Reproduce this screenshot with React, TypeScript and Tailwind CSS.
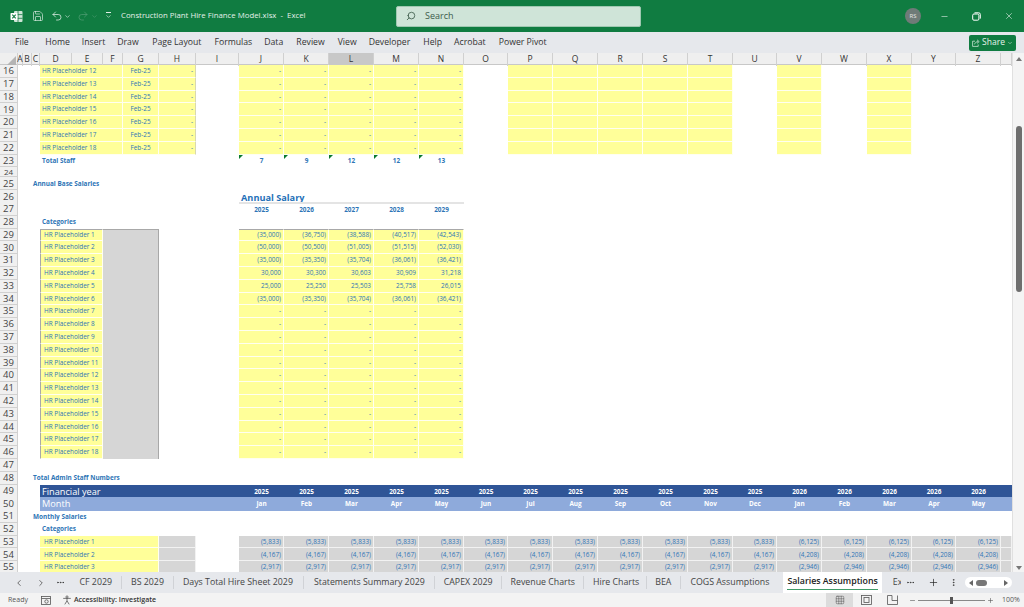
import { ChevronDown, ChevronLeft, ChevronRight, Ellipsis, EllipsisVertical, Grid3x3, Minus, Plus, Save, Search, Undo2, Redo2, X } from "lucide-react";

type Cell = { t?: string; c?: string; span?: number; corner?: boolean };
type Cells = Record<string, Cell>;

const LETTERS = "A B C D E F G H I J K L M N O P Q R S T U V W X Y Z AA".split(" ");
const SPANS: Record<number, string> = { 1: "", 2: "col-span-2", 3: "col-span-3", 4: "col-span-4" };
const GRID =
  "grid grid-cols-[18px_5px_9px_8px_32px_31px_20px_36px_37px_43px_45px_45px_45px_45px_45px_44px_45px_45px_45px_45px_45px_44px_45px_45px_45px_44px_45px_11px]";

const YELLOW = "bg-[#ffff99] border-r border-b border-[#fffff0]";
const GRAY = "bg-[#d6d6d6] border-r border-b border-[#f2f2f2]";
const BLUE = "text-[#2e75b6]";
const RIGHT = "justify-end pr-[2px]";

function Row({ n, cells, short }: { n: number; cells: Cells; short?: boolean }) {
  const out = [];
  for (let i = 0; i < LETTERS.length; i++) {
    const cell = cells[LETTERS[i]] ?? {};
    out.push(
      <div
        key={LETTERS[i]}
        className={`relative flex items-center whitespace-nowrap min-w-0 ${SPANS[cell.span ?? 1]} ${cell.c ?? ""}`}
      >
        {cell.corner && (
          <svg className="absolute left-0 top-0" width="4" height="4" viewBox="0 0 4 4">
            <path d="M0 0h4L0 4z" fill="#0a7a2f" />
          </svg>
        )}
        {cell.t}
      </div>
    );
    i += (cell.span ?? 1) - 1;
  }
  return (
    <div className={`${GRID} ${short ? "h-[10px]" : "h-[12.8px]"} text-[6.4px] font-['Open_Sans',sans-serif] ${BLUE}`}>
      <div
        className={`flex items-center justify-center overflow-hidden bg-[#f0f0f0] border-r border-b border-[#d0d0d0] leading-none text-[#444] ${
          short ? "text-[8px]" : "text-[9.5px]"
        }`}
      >
        {n}
      </div>
      {out}
    </div>
  );
}

function fill(names: string, cell: Cell) {
  const o: Cells = {};
  names.split(" ").forEach((k) => (o[k] = cell));
  return o;
}

function staffRow(n: number, idx: number) {
  return (
    <Row
      key={n}
      n={n}
      cells={{
        ...fill("P Q R S T V X", { c: YELLOW }),
        ...fill("J K L M N", { t: "-", c: `${YELLOW} ${RIGHT}` }),
        D: { t: `HR Placeholder ${idx}`, span: 3, c: `${YELLOW} pl-[2px]` },
        G: { t: "Feb-25", c: `${YELLOW} justify-center` },
        H: { t: "-", c: `${YELLOW} ${RIGHT} border-r-[#d8d8b0]` },
      }}
    />
  );
}

const ANNUAL = [
  ["(35,000)", "(36,750)", "(38,588)", "(40,517)", "(42,543)"],
  ["(50,000)", "(50,500)", "(51,005)", "(51,515)", "(52,030)"],
  ["(35,000)", "(35,350)", "(35,704)", "(36,061)", "(36,421)"],
  ["30,000", "30,300", "30,603", "30,909", "31,218"],
  ["25,000", "25,250", "25,503", "25,758", "26,015"],
  ["(35,000)", "(35,350)", "(35,704)", "(36,061)", "(36,421)"],
];

function salaryRow(n: number, idx: number) {
  const vals = ANNUAL[idx - 1] ?? ["-", "-", "-", "-", "-"];
  const top = idx === 1 ? "border-t border-t-[#a8a8a8]" : "";
  const cells: Cells = {
    D: { t: `HR Placeholder ${idx}`, span: 2, c: `${YELLOW} pl-[3px] border-l border-l-[#a8a8a8] ${top}` },
    F: { span: 2, c: `bg-[#d6d6d6] border-r border-r-[#a8a8a8] ${top}` },
  };
  "J K L M N".split(" ").forEach((k, i) => {
    cells[k] = { t: vals[i], c: `${YELLOW} ${RIGHT} ${top}` };
  });
  return <Row key={n} n={n} cells={cells} />;
}

const MONTH_COLS = "J K L M N O P Q R S T U V W X Y Z".split(" ");
const MONTHS = "Jan Feb Mar Apr May Jun Jul Aug Sep Oct Nov Dec Jan Feb Mar Apr May".split(" ");

function bannerRow(n: number, label: string, bg: string, vals: string[]) {
  const cells: Cells = {
    D: { t: label, span: 4, c: `${bg} pl-[2px] text-[9.2px] text-white` },
    H: { c: bg },
    I: { c: bg },
    AA: { c: bg },
  };
  MONTH_COLS.forEach((k, i) => {
    cells[k] = { t: vals[i], c: `${bg} justify-center font-bold text-white` };
  });
  return <Row n={n} cells={cells} />;
}

function monthlyRow(n: number, idx: number, a: string, b: string) {
  const cells: Cells = {
    D: { t: `HR Placeholder ${idx}`, span: 4, c: `${YELLOW} pl-[4px]` },
    H: { c: GRAY },
    AA: { c: GRAY },
  };
  MONTH_COLS.forEach((k, i) => {
    cells[k] = { t: i < 12 ? a : b, c: `${GRAY} ${RIGHT}` };
  });
  return <Row n={n} cells={cells} />;
}

function ExcelLogo() {
  return (
    <svg width="13" height="13" viewBox="0 0 13 13">
      <rect x="4" y="1" width="8.5" height="11" rx="1" fill="#cfe5d8" />
      <path d="M8 1v11M4 4.6h8.5M4 8.3h8.5" stroke="#107c41" strokeWidth="0.8" />
      <rect x="0.5" y="3" width="7" height="7" rx="0.8" fill="#fff" />
      <path d="M2.3 4.6l3.4 3.8M5.7 4.6L2.3 8.4" stroke="#107c41" strokeWidth="1.1" />
    </svg>
  );
}

function TitleBar() {
  return (
    <div className="flex h-8 items-center bg-[#107c41] text-[#e4f0e9] font-['Open_Sans',sans-serif]">
      <div className="ml-[10px] w-[22px]">
        <ExcelLogo />
      </div>
      <Save size={12} strokeWidth={1.3} />
      <Undo2 size={12} strokeWidth={1.5} className="ml-[7px]" />
      <ChevronDown size={7} className="ml-[1px]" />
      <Redo2 size={12} strokeWidth={1.5} className="ml-[6px] text-[#4f9c73]" />
      <ChevronDown size={7} className="ml-[2px] text-[#4f9c73]" />
      <div className="ml-[7px] flex w-[7px] flex-col items-center">
        <div className="h-[1px] w-[5px] bg-[#e4f0e9]" />
        <ChevronDown size={7} />
      </div>
      <span className="ml-[9px] w-[275px] whitespace-pre text-[7.8px]">
        Construction Plant Hire Finance Model.xlsx  -  Excel
      </span>
      <div className="flex h-[21px] w-[245px] items-center rounded-[2px] border border-[#9fc8b1] bg-[#cfe4d8] text-[#3d5c4b]">
        <Search size={10} className="ml-[9px]" style={{ transform: "scaleX(-1)" }} />
        <span className="ml-[9px] text-[9px]">Search</span>
      </div>
      <div className="ml-[264px] flex h-4 w-4 items-center justify-center rounded-full bg-[#6f7b78] text-[6px] text-[#e6e6e6]">
        RS
      </div>
      <Minus size={9} strokeWidth={1.4} className="ml-[19px] text-white" />
      <svg className="ml-[23px]" width="9" height="9" viewBox="0 0 9 9" fill="none" stroke="#fff" strokeWidth="1">
        <rect x="0.7" y="2" width="6.2" height="6.2" rx="1.2" />
        <path d="M2.5 .8h4.2a1.6 1.6 0 0 1 1.6 1.6v4.2" />
      </svg>
      <X size={10} strokeWidth={1.3} className="ml-[23px] text-white" />
    </div>
  );
}

const RIBBON = [
  ["File", "mr-[16.5px]"],
  ["Home", "mr-[12px]"],
  ["Insert", "mr-[12px]"],
  ["Draw", "mr-[13.5px]"],
  ["Page Layout", "mr-[13px]"],
  ["Formulas", "mr-[12px]"],
  ["Data", "mr-[13px]"],
  ["Review", "mr-[13px]"],
  ["View", "mr-[12px]"],
  ["Developer", "mr-[13px]"],
  ["Help", "mr-[12px]"],
  ["Acrobat", "mr-[13px]"],
  ["Power Pivot", ""],
];

function Ribbon() {
  return (
    <div className="flex h-[21px] items-center bg-[#e6e8ec] pl-[15px] text-[8.7px] text-[#333] font-['Open_Sans',sans-serif]">
      {RIBBON.map(([t, c]) => (
        <span key={t} className={`whitespace-nowrap ${c}`}>
          {t}
        </span>
      ))}
      <div className="ml-auto mr-[8px] flex h-4 w-[47px] items-center justify-center gap-[2px] rounded-[2px] bg-[#107c41] text-[#e6f2ea]">
        <svg width="8" height="8" viewBox="0 0 8 8" fill="none" stroke="currentColor" strokeWidth="0.7">
          <path d="M3 2.2H.6v5.2h5.6V5.5M2.6 5.3C3 3.6 4.4 2.6 6 2.6M5 .8l2.2 1.8L5 4.4" />
        </svg>
        <span className="text-[8.5px]">Share</span>
        <ChevronDown size={6} />
      </div>
    </div>
  );
}

function ColumnHeader() {
  return (
    <div className={`${GRID} h-3 bg-[#efefef] border-b border-[#c8c8c8] text-[8.5px] text-[#333] font-['Open_Sans',sans-serif]`}>
      <div className="flex items-end justify-end border-r border-[#d0d0d0] pb-[1px] pr-[1px]">
        <svg width="9" height="9" viewBox="0 0 9 9">
          <path d="M9 0v9H0z" fill="#b4b4b4" />
        </svg>
      </div>
      {LETTERS.map((l) => (
        <div
          key={l}
          className={`flex items-center justify-center border-r border-[#d0d0d0] ${l === "L" ? "bg-[#c8c8c8]" : ""}`}
        >
          {l === "AA" ? "" : l}
        </div>
      ))}
    </div>
  );
}

function Sheet() {
  const staff = [];
  for (let i = 0; i < 7; i++) staff.push(staffRow(16 + i, 12 + i));
  const salaries = [];
  for (let i = 0; i < 18; i++) salaries.push(salaryRow(29 + i, i + 1));
  const bold = "font-bold";
  return (
    <div className="h-[507px] w-[1012px] overflow-hidden bg-white">
      {staff}
      <Row
        n={23}
        cells={{
          D: { t: "Total Staff", c: `${bold} pl-[2px]` },
          J: { t: "7", corner: true, c: `${bold} justify-center` },
          K: { t: "9", corner: true, c: `${bold} justify-center` },
          L: { t: "12", corner: true, c: `${bold} justify-center` },
          M: { t: "12", corner: true, c: `${bold} justify-center` },
          N: { t: "13", corner: true, c: `${bold} justify-center` },
        }}
      />
      <Row n={24} short cells={{}} />
      <Row n={25} cells={{ C: { t: "Annual Base Salaries", c: `${bold} pl-[1px]` } }} />
      <Row
        n={26}
        cells={{
          J: { t: "Annual Salary", c: `${bold} pl-[2px] pt-[3px] text-[9.2px] text-[#1f70b8] border-b-2 border-[#e4e4e4] leading-none` },
          ...fill("K L M N", { c: "border-b-2 border-[#e4e4e4]" }),
        }}
      />
      <Row
        n={27}
        cells={{
          J: { t: "2025", c: `${bold} justify-center` },
          K: { t: "2026", c: `${bold} justify-center` },
          L: { t: "2027", c: `${bold} justify-center` },
          M: { t: "2028", c: `${bold} justify-center` },
          N: { t: "2029", c: `${bold} justify-center` },
        }}
      />
      <Row n={28} cells={{ D: { t: "Categories", c: `${bold} pl-[2px]` } }} />
      {salaries}
      <Row n={47} cells={{}} />
      <Row n={48} cells={{ C: { t: "Total Admin Staff Numbers", c: `${bold} pl-[1px]` } }} />
      {bannerRow(49, "Financial year", "bg-[#2f5597]", MONTHS.map((_, i) => (i < 12 ? "2025" : "2026")))}
      {bannerRow(50, "Month", "bg-[#8eaadb]", MONTHS)}
      <Row n={51} cells={{ C: { t: "Monthly Salaries", c: `${bold} pl-[1px]` } }} />
      <Row n={52} cells={{ D: { t: "Categories", c: `${bold} pl-[2px]` } }} />
      {monthlyRow(53, 1, "(5,833)", "(6,125)")}
      {monthlyRow(54, 2, "(4,167)", "(4,208)")}
      {monthlyRow(55, 3, "(2,917)", "(2,946)")}
    </div>
  );
}

function ScrollBar() {
  return (
    <div className="flex h-[519px] w-3 flex-col items-center border-l border-[#e0e0e0] bg-[#f4f4f4] pt-[4px]">
      <svg width="6" height="4" viewBox="0 0 6 4">
        <path d="M3 0l3 4H0z" fill="#777" />
      </svg>
      <div className="mt-[65px] h-[166px] w-[6px] rounded-[3px] bg-[#6e6e6e]" />
      <svg className="mt-auto mb-[2px]" width="6" height="4" viewBox="0 0 6 4">
        <path d="M3 4L0 0h6z" fill="#777" />
      </svg>
    </div>
  );
}

const TABS = [
  ["CF 2029", "px-[9px]"],
  ["BS 2029", "px-[9px]"],
  ["Days Total Hire Sheet 2029", "pl-[9px] pr-[10px]"],
  ["Statements Summary 2029", "pl-[10px] pr-[9px]"],
  ["CAPEX 2029", "pl-[9px] pr-[8px]"],
  ["Revenue Charts", "pl-[9px] pr-[8px]"],
  ["Hire Charts", "pl-[9px] pr-[7px]"],
  ["BEA", "pl-[8px] pr-[9px]"],
  ["COGS Assumptions", "px-[9px]"],
];

function TabBar() {
  return (
    <div className="flex h-[21px] items-center overflow-hidden bg-[#e6e8ec] text-[8.8px] text-[#444] font-['Open_Sans',sans-serif]">
      <ChevronLeft size={10} className="ml-[14px] shrink-0 text-[#555]" />
      <ChevronRight size={10} className="ml-[12px] shrink-0 text-[#555]" />
      <Ellipsis size={9} className="ml-[10px] mr-[5.5px] shrink-0 text-[#333]" />
      {TABS.map(([t, c], i) => (
        <span
          key={t}
          className={`shrink-0 whitespace-nowrap ${c} ${i < TABS.length - 1 ? "border-r border-[#d0d2d6]" : ""}`}
        >
          {t}
        </span>
      ))}
      <div className="ml-[5px] flex h-[21px] shrink-0 flex-col items-center bg-white px-[4px] pt-[3px] font-semibold text-[#222]">
        <span className="whitespace-nowrap leading-[13px]">Salaries Assumptions</span>
        <div className="mt-[1px] h-[1px] w-full bg-[#3f9b68]" />
      </div>
      <span className="ml-[11px] w-[8px] shrink-0 overflow-hidden">Ex</span>
      <Ellipsis size={9} className="ml-[5.5px] shrink-0 text-[#333]" />
      <Plus size={11} strokeWidth={1.5} className="ml-[13px] shrink-0 text-[#222]" />
      <EllipsisVertical size={9} className="ml-[10px] shrink-0 text-[#333]" />
      <div className="ml-[6.5px] flex h-[11px] w-[47px] shrink-0 items-center rounded-full bg-white px-[4px]">
        <svg width="4" height="6" viewBox="0 0 4 6"><path d="M0 3l4-3v6z" fill="#666" /></svg>
        <div className="ml-[3px] h-[6px] w-[11px] rounded-full bg-[#777]" />
        <svg className="ml-auto" width="4" height="6" viewBox="0 0 4 6"><path d="M4 3L0 0v6z" fill="#666" /></svg>
      </div>
    </div>
  );
}

function StatusBar() {
  return (
    <div className="flex h-[14px] items-center bg-[#f3f3f3] text-[7px] text-[#555] font-['Open_Sans',sans-serif]">
      <span className="ml-[8px]">Ready</span>
      <svg className="ml-[13px]" width="10" height="9" viewBox="0 0 10 9" fill="none" stroke="#555" strokeWidth="0.8">
        <rect x="0.5" y="0.5" width="9" height="8" />
        <path d="M.5 2.5h9" />
        <circle cx="5.5" cy="5.5" r="1.7" />
      </svg>
      <svg className="ml-[11px]" width="10" height="10" viewBox="0 0 10 10" fill="none" stroke="#444" strokeWidth="0.7">
        <circle cx="5" cy="2" r="1.1" />
        <path d="M1.2 3.4h7.6M5 3.4v2.4M5 5.8L2.8 9.4M5 5.8l2.2 3.6" />
      </svg>
      <span className="ml-[2px] font-semibold text-[#333]">Accessibility: Investigate</span>
      <div className="ml-auto flex h-[14px] w-[27px] items-center justify-center bg-[#dcdcdc]">
        <Grid3x3 size={10} strokeWidth={1.1} className="text-[#444]" />
      </div>
      <svg className="ml-[7.5px]" width="11" height="10" viewBox="0 0 11 10" fill="none" stroke="#555" strokeWidth="0.8">
        <rect x="0.5" y="0.5" width="10" height="9" />
        <rect x="3" y="2.5" width="5" height="5" />
      </svg>
      <svg className="ml-[15px]" width="11" height="10" viewBox="0 0 11 10" fill="none" stroke="#555" strokeWidth="0.8">
        <path d="M.5.5v9h10V.5M5 .5v5h5.5M.5.5H5" />
      </svg>
      <Minus size={7} className="ml-[11px] text-[#555]" />
      <div className="ml-[2.5px] flex h-[1px] w-[67px] items-center bg-[#888]">
        <div className="ml-[32px] h-[7px] w-[3px] bg-[#555]" />
      </div>
      <Plus size={7} className="ml-[1.5px] text-[#555]" />
      <span className="ml-[8.5px] w-[16px] mr-[6px] whitespace-nowrap">100%</span>
    </div>
  );
}

export default function App() {
  return (
    <div className="flex h-[607px] w-[1024px] flex-col overflow-hidden bg-white">
      <TitleBar />
      <Ribbon />
      <div className="flex h-[519px]">
        <div className="w-[1012px]">
          <ColumnHeader />
          <Sheet />
        </div>
        <ScrollBar />
      </div>
      <TabBar />
      <StatusBar />
    </div>
  );
}
